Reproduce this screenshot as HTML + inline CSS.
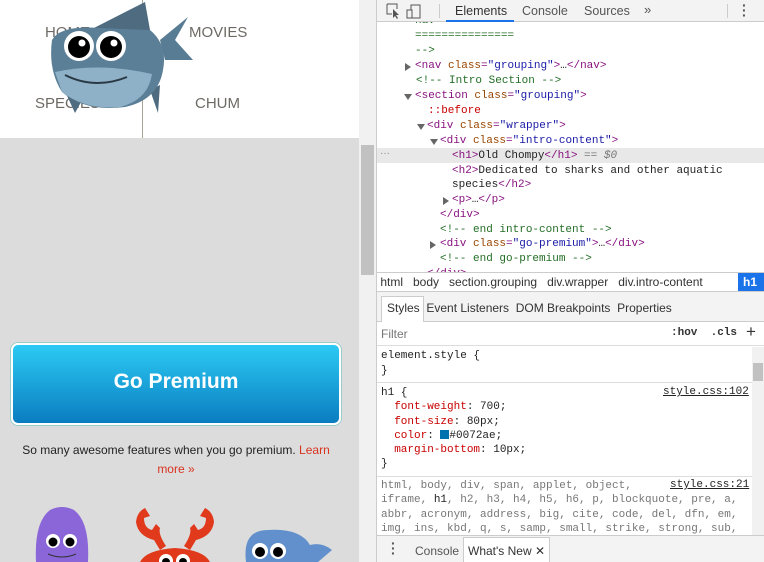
<!DOCTYPE html>
<html><head><meta charset="utf-8"><style>
*{margin:0;padding:0;box-sizing:border-box}
body{width:764px;height:562px;overflow:hidden;position:relative;font-family:"Liberation Sans",sans-serif;background:#fff}
.a{position:absolute}
.m{font-family:"Liberation Mono",monospace;font-size:11px;white-space:pre}
.l{position:absolute;font-family:"Liberation Mono",monospace;font-size:11px;white-space:pre;line-height:15px;color:#222}
.tg{color:#881280}.at{color:#994500}.av{color:#1a1aa6}.cm{color:#236e25}.pr{color:#c80000}
.nav{font-size:15px;color:#6d6a64}
.tr{position:absolute;width:0;height:0}
.tr.r{border-left:6px solid #666;border-top:4px solid transparent;border-bottom:4px solid transparent}
.tr.d{border-top:6px solid #666;border-left:4px solid transparent;border-right:4px solid transparent}
</style></head><body>
<!-- left page -->
<div class="a" style="left:0;top:0;width:359px;height:562px;background:#dcdcdc"></div>
<div class="a" style="left:0;top:0;width:359px;height:138px;background:#fff"></div>
<div class="a" style="left:142px;top:0;width:1px;height:138px;background:#a8a290"></div>
<div class="a nav" style="left:45px;top:24px">HOME</div>
<div class="a nav" style="left:189px;top:24px">MOVIES</div>
<div class="a nav" style="left:35px;top:95px">SPECIES</div>
<div class="a nav" style="left:195px;top:95px">CHUM</div>
<svg class="a" style="left:48px;top:0" width="150" height="116" viewBox="48 0 150 116">
<path d="M90 30 L145 2 L150 30 Z" fill="#4f6b80"/>
<path d="M160 40 L188 17 L175 40 L193 60 L165 60 Z" fill="#587c93"/>
<path d="M62 85 L75 113 L85 95 Z" fill="#4f6b80"/>
<path d="M150 90 L158 113 L160 85 Z" fill="#4f6b80"/>
<path d="M52 40 Q60 25 100 28 L150 30 Q168 45 163 70 Q158 100 125 107 Q85 112 62 92 Q48 70 52 40 Z" fill="#5a7f97"/>
<path d="M55 72 Q100 62 152 74 Q148 100 120 107 Q85 110 62 92 Z" fill="#8fb1c8"/>
<path d="M65 75 Q95 90 127 77" stroke="#2a3a45" stroke-width="2" fill="none"/>
<circle cx="79" cy="46" r="15" fill="#fff"/><circle cx="79" cy="47" r="11" fill="#000"/><circle cx="82" cy="43" r="3.5" fill="#fff"/>
<circle cx="111" cy="46" r="15" fill="#fff"/><circle cx="111" cy="47" r="11" fill="#000"/><circle cx="114" cy="43" r="3.5" fill="#fff"/>
</svg>
<div class="a" style="left:11px;top:343px;width:330px;height:82px;border:2px solid #fff;border-radius:7px;background:linear-gradient(#2ccaf4,#0a7dc0);box-shadow:0 0 0 1px #9cc"></div>
<div class="a" style="left:11px;top:370px;width:330px;text-align:center;color:#fff;font-weight:bold;font-size:21px">Go Premium</div>
<div class="a" style="left:0;top:441px;width:352px;text-align:center;font-size:12px;line-height:19px;color:#222;padding:0 20px">So many awesome features when you go premium. <span style="color:#d9331f">Learn more »</span></div>
<svg class="a" style="left:0;top:500px" width="359" height="62">
<path d="M36 62 Q34 22 50 10 Q62 4 74 10 Q90 22 88 62 Z" fill="#8a66d8"/>
<circle cx="53" cy="41" r="7" fill="#fff"/><circle cx="53" cy="42" r="4.5" fill="#000"/>
<circle cx="70" cy="41" r="7" fill="#fff"/><circle cx="70" cy="42" r="4.5" fill="#000"/>
<path d="M48 54 Q62 60 76 54" stroke="#333" fill="none"/>
<path d="M140 62 Q146 50 175 48 Q204 50 210 62 Z" fill="#e0391b"/>
<path d="M160 50 L154 40 Q138 36 136 22 Q137 12 145 8 L150 16 L144 18 Q144 28 152 30 L156 24 L160 28 Q158 34 166 46 Z" fill="#e0391b"/>
<path d="M190 50 L196 40 Q212 36 214 22 Q213 12 205 8 L200 16 L206 18 Q206 28 198 30 L194 24 L190 28 Q192 34 184 46 Z" fill="#e0391b"/>
<circle cx="166" cy="61" r="7" fill="#fff"/><circle cx="183" cy="61" r="7" fill="#fff"/>
<circle cx="166" cy="62" r="4" fill="#000"/><circle cx="183" cy="62" r="4" fill="#000"/>
<path d="M246 62 Q242 30 268 30 Q300 28 310 45 Q322 42 332 50 L318 62 Z" fill="#6190cc"/>
<circle cx="260" cy="51" r="8" fill="#fff"/><circle cx="260" cy="52" r="5" fill="#000"/>
<circle cx="278" cy="51" r="8" fill="#fff"/><circle cx="278" cy="52" r="5" fill="#000"/>
</svg>
<!-- page scrollbar -->
<div class="a" style="left:359px;top:0;width:17px;height:562px;background:#f1f1f1"></div>
<div class="a" style="left:361px;top:145px;width:13px;height:130px;background:#c1c1c1"></div>
<div class="a" style="left:376px;top:0;width:1px;height:562px;background:#ccc"></div>
<!-- devtools -->
<div class="a" style="left:377px;top:148px;width:387px;height:15px;background:#e8e8e8"></div>
<div class="a" style="left:380px;top:148px;font-size:10px;color:#888">···</div>
<div class="l cm" style="left:415px;top:14px">nav</div>
<div class="l cm" style="left:415px;top:29px">===============</div>
<div class="l cm" style="left:415px;top:44px">--&gt;</div>
<div class="tr r" style="left:405px;top:63px"></div>
<div class="l" style="left:415px;top:59px"><span class="tg">&lt;nav </span><span class="at">class</span><span class="tg">=</span><span class="av">"grouping"</span><span class="tg">&gt;</span>…<span class="tg">&lt;/nav&gt;</span></div>
<div class="l cm" style="left:416px;top:74px">&lt;!-- Intro Section --&gt;</div>
<div class="tr d" style="left:404px;top:94px"></div>
<div class="l" style="left:415px;top:89px"><span class="tg">&lt;section </span><span class="at">class</span><span class="tg">=</span><span class="av">"grouping"</span><span class="tg">&gt;</span></div>
<div class="l pr" style="left:428px;top:104px">::before</div>
<div class="tr d" style="left:417px;top:124px"></div>
<div class="l" style="left:427px;top:119px"><span class="tg">&lt;div </span><span class="at">class</span><span class="tg">=</span><span class="av">"wrapper"</span><span class="tg">&gt;</span></div>
<div class="tr d" style="left:430px;top:139px"></div>
<div class="l" style="left:440px;top:134px"><span class="tg">&lt;div </span><span class="at">class</span><span class="tg">=</span><span class="av">"intro-content"</span><span class="tg">&gt;</span></div>
<div class="l" style="left:452px;top:149px"><span class="tg">&lt;h1&gt;</span>Old Chompy<span class="tg">&lt;/h1&gt;</span> <span style="color:#777">== <i>$0</i></span></div>
<div class="l" style="left:452px;top:164px"><span class="tg">&lt;h2&gt;</span>Dedicated to sharks and other aquatic</div>
<div class="l" style="left:452px;top:178px">species<span class="tg">&lt;/h2&gt;</span></div>
<div class="tr r" style="left:443px;top:197px"></div>
<div class="l" style="left:452px;top:193px"><span class="tg">&lt;p&gt;</span>…<span class="tg">&lt;/p&gt;</span></div>
<div class="l tg" style="left:440px;top:208px">&lt;/div&gt;</div>
<div class="l cm" style="left:440px;top:223px">&lt;!-- end intro-content --&gt;</div>
<div class="tr r" style="left:430px;top:241px"></div>
<div class="l" style="left:440px;top:237px"><span class="tg">&lt;div </span><span class="at">class</span><span class="tg">=</span><span class="av">"go-premium"</span><span class="tg">&gt;</span>…<span class="tg">&lt;/div&gt;</span></div>
<div class="l cm" style="left:440px;top:252px">&lt;!-- end go-premium --&gt;</div>
<div class="l tg" style="left:427px;top:267px">&lt;/div&gt;</div>
<div class="a" style="left:377px;top:0;width:387px;height:22px;background:#f3f3f3;border-bottom:1px solid #ccc"></div>
<svg class="a" style="left:386px;top:3px" width="40" height="16"><path d="M1 1h10v5M1 1v10h5" stroke="#555" fill="none"/><path d="M7 6l6 6-3 0 2 3-1 1-2-3-2 2z" fill="#555"/><rect x="25" y="2" width="9" height="13" stroke="#555" fill="none"/><rect x="21" y="7" width="5" height="8" stroke="#555" fill="#f3f3f3"/></svg>
<div class="a" style="left:439px;top:4px;width:1px;height:14px;background:#ccc"></div>
<div class="a" style="left:455px;top:4px;font-size:12.5px;color:#333">Elements</div>
<div class="a" style="left:446px;top:20px;width:68px;height:2px;background:#1a73e8"></div>
<div class="a" style="left:522px;top:4px;font-size:12.5px;color:#555">Console</div>
<div class="a" style="left:584px;top:4px;font-size:12.5px;color:#555">Sources</div>
<div class="a" style="left:644px;top:2px;font-size:13px;color:#555">»</div>
<div class="a" style="left:727px;top:4px;width:1px;height:14px;background:#ccc"></div>
<div class="a" style="left:742px;top:3px;font-size:14px;color:#555;font-weight:bold;line-height:5px">·<br>·<br>·</div>
<div class="a" style="left:377px;top:272px;width:387px;height:20px;background:#fff;border-top:1px solid #ccc;border-bottom:1px solid #ccc;font-size:12px;color:#333;white-space:pre;line-height:19px"> html   body   section.grouping   div.wrapper   div.intro-content </div>
<div class="a" style="left:738px;top:273px;width:26px;height:18px;background:#1a73e8;color:#fff;font-weight:bold;font-size:12px;line-height:18px;padding-left:5px">h1</div>
<div class="a" style="left:377px;top:292px;width:387px;height:30px;background:#f3f3f3;border-bottom:1px solid #ccc"></div>
<div class="a" style="left:381px;top:296px;width:43px;height:26px;background:#fff;border:1px solid #ccc;border-bottom:none"></div>
<div class="a" style="left:387px;top:301px;font-size:12px;color:#333;white-space:pre">Styles  Event Listeners  DOM Breakpoints  Properties</div>
<div class="a" style="left:381px;top:327px;font-size:12px;color:#777">Filter</div>
<div class="a m" style="left:671px;top:327px;font-weight:bold;color:#333">:hov  .cls</div>
<div class="a" style="left:746px;top:322px;font-size:17px;color:#333">+</div>
<div class="a" style="left:377px;top:345px;width:387px;height:1px;background:#ddd"></div>
<div class="a m" style="left:381px;top:349px;line-height:14.5px;color:#222">element.style {
}</div>
<div class="a" style="left:377px;top:382px;width:387px;height:1px;background:#ddd"></div>
<div class="a m" style="left:381px;top:386px;line-height:14.3px;color:#222">h1 {
  <span class="pr">font-weight</span>: 700;
  <span class="pr">font-size</span>: 80px;
  <span class="pr">color</span>: <span style="display:inline-block;width:9px;height:9px;background:#0072ae;vertical-align:-1px"></span>#0072ae;
  <span class="pr">margin-bottom</span>: 10px;
}</div>
<div class="a m" style="left:663px;top:386px;text-decoration:underline;color:#222">style.css:102</div>
<div class="a" style="left:377px;top:476px;width:387px;height:1px;background:#ddd"></div>
<div class="a m" style="left:381px;top:479px;line-height:14.3px;color:#777">html, body, div, span, applet, object,
iframe, <span style="color:#222">h1</span>, h2, h3, h4, h5, h6, p, blockquote, pre, a,
abbr, acronym, address, big, cite, code, del, dfn, em,
img, ins, kbd, q, s, samp, small, strike, strong, sub,</div>
<div class="a m" style="left:670px;top:479px;text-decoration:underline;color:#222;background:#fff">style.css:21</div>
<div class="a" style="left:752px;top:347px;width:12px;height:188px;background:#f1f1f1"></div>
<div class="a" style="left:753px;top:363px;width:10px;height:18px;background:#c1c1c1"></div>
<div class="a" style="left:377px;top:535px;width:387px;height:27px;background:#f3f3f3;border-top:1px solid #ccc"></div>
<div class="a" style="left:391px;top:541px;font-size:14px;color:#555;font-weight:bold;line-height:5px">·<br>·<br>·</div>
<div class="a" style="left:415px;top:544px;font-size:12px;color:#555">Console</div>
<div class="a" style="left:463px;top:537px;width:87px;height:25px;background:#fff;border:1px solid #ccc;border-bottom:none"></div>
<div class="a" style="left:468px;top:544px;font-size:12px;color:#333">What's New ✕</div>
</body></html>
